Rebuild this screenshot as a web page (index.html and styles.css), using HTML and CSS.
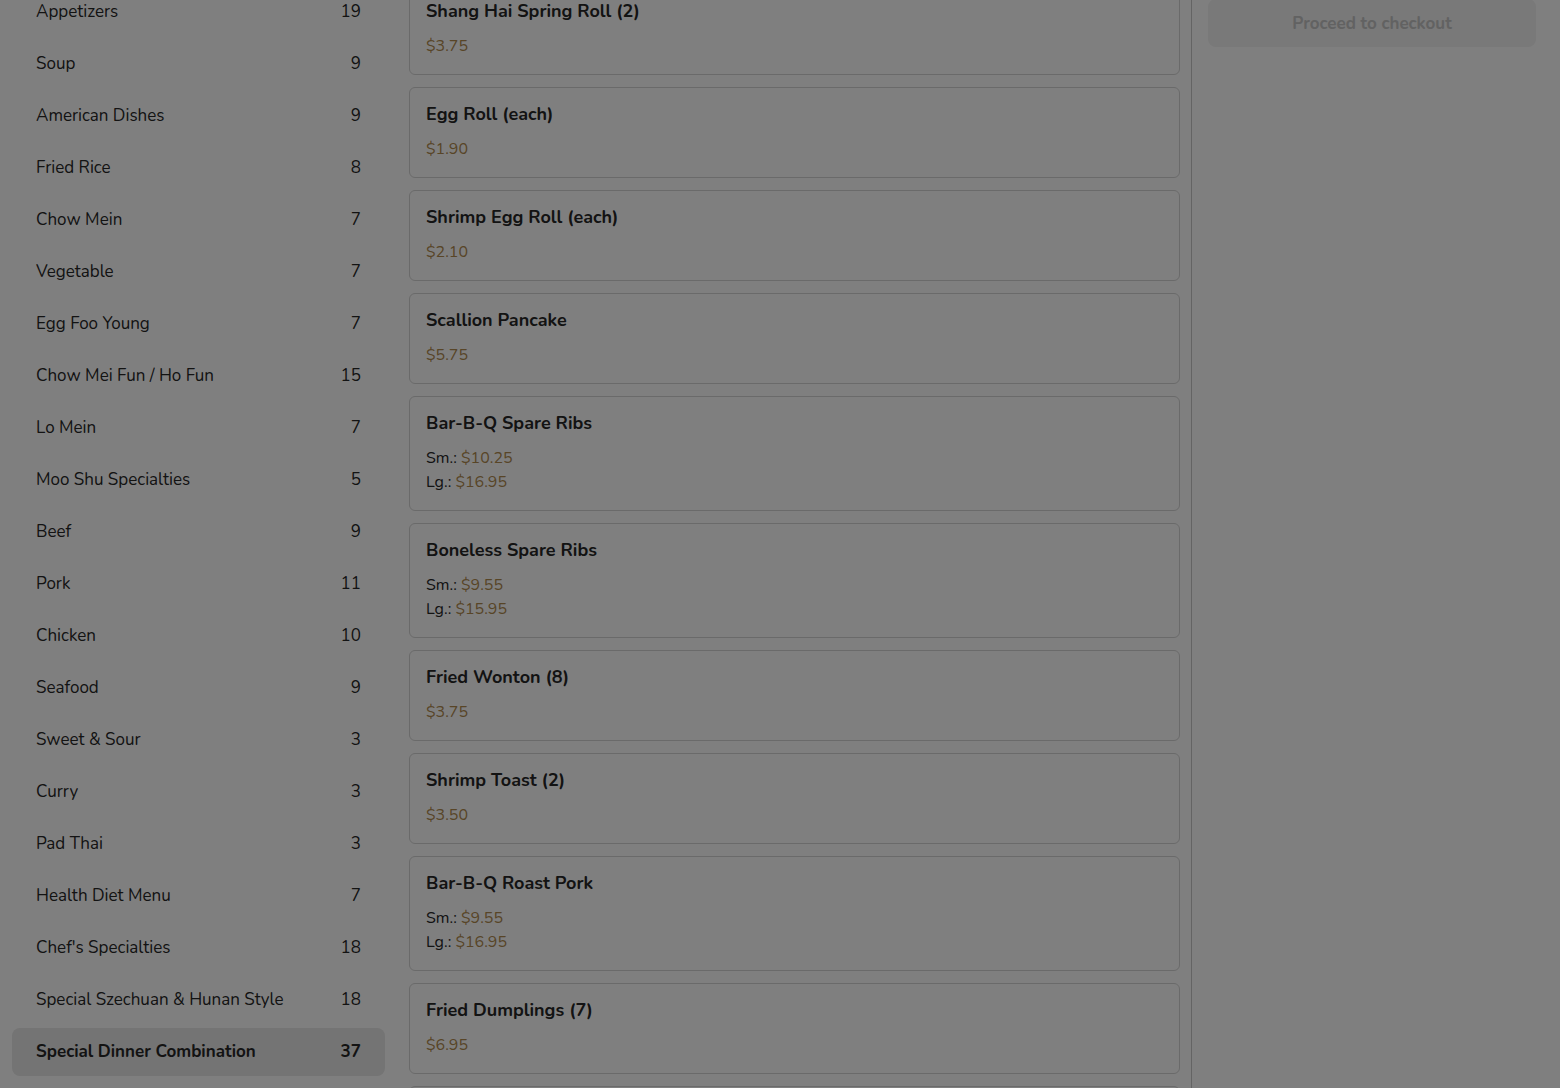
FILE: index.html
```html
<!DOCTYPE html>
<html lang="en">
<head>
<meta charset="utf-8">
<title>Menu</title>
<link rel="stylesheet" href="styles.css">
</head>
<body>
<div class="page">
  <aside class="categories">
    <ul class="cat-list">
      <li class="cat"><span>Appetizers</span><span>19</span></li>
      <li class="cat"><span>Soup</span><span>9</span></li>
      <li class="cat"><span>American Dishes</span><span>9</span></li>
      <li class="cat"><span>Fried Rice</span><span>8</span></li>
      <li class="cat"><span>Chow Mein</span><span>7</span></li>
      <li class="cat"><span>Vegetable</span><span>7</span></li>
      <li class="cat"><span>Egg Foo Young</span><span>7</span></li>
      <li class="cat"><span>Chow Mei Fun / Ho Fun</span><span>15</span></li>
      <li class="cat"><span>Lo Mein</span><span>7</span></li>
      <li class="cat"><span>Moo Shu Specialties</span><span>5</span></li>
      <li class="cat"><span>Beef</span><span>9</span></li>
      <li class="cat"><span>Pork</span><span>11</span></li>
      <li class="cat"><span>Chicken</span><span>10</span></li>
      <li class="cat"><span>Seafood</span><span>9</span></li>
      <li class="cat"><span>Sweet &amp; Sour</span><span>3</span></li>
      <li class="cat"><span>Curry</span><span>3</span></li>
      <li class="cat"><span>Pad Thai</span><span>3</span></li>
      <li class="cat"><span>Health Diet Menu</span><span>7</span></li>
      <li class="cat"><span>Chef's Specialties</span><span>18</span></li>
      <li class="cat"><span>Special Szechuan &amp; Hunan Style</span><span>18</span></li>
      <li class="cat active"><span>Special Dinner Combination</span><span>37</span></li>
    </ul>
  </aside>

  <main class="items">
    <div class="card"><h3>Shang Hai Spring Roll (2)</h3><p class="price">$3.75</p></div>
    <div class="card"><h3>Egg Roll (each)</h3><p class="price">$1.90</p></div>
    <div class="card"><h3>Shrimp Egg Roll (each)</h3><p class="price">$2.10</p></div>
    <div class="card"><h3>Scallion Pancake</h3><p class="price">$5.75</p></div>
    <div class="card"><h3>Bar-B-Q Spare Ribs</h3><p class="price"><span class="size">Sm.:</span> $10.25</p><p class="price"><span class="size">Lg.:</span> $16.95</p></div>
    <div class="card"><h3>Boneless Spare Ribs</h3><p class="price"><span class="size">Sm.:</span> $9.55</p><p class="price"><span class="size">Lg.:</span> $15.95</p></div>
    <div class="card"><h3>Fried Wonton (8)</h3><p class="price">$3.75</p></div>
    <div class="card"><h3>Shrimp Toast (2)</h3><p class="price">$3.50</p></div>
    <div class="card"><h3>Bar-B-Q Roast Pork</h3><p class="price"><span class="size">Sm.:</span> $9.55</p><p class="price"><span class="size">Lg.:</span> $16.95</p></div>
    <div class="card"><h3>Fried Dumplings (7)</h3><p class="price">$6.95</p></div>
    <div class="card card-empty"></div>
  </main>

  <section class="cart">
    <button class="checkout" disabled>Proceed to checkout</button>
  </section>
</div>
<div class="overlay"></div>
</body>
</html>
```
FILE: styles.css
```css
html, body {
  margin: 0;
  padding: 0;
  height: 100%;
  overflow: hidden;
  background: #ffffff;
}

body {
  font-family: "Nunito", "Lato", "Noto Sans", sans-serif;
  color: #262626;
}

.page {
  display: grid;
  grid-template-columns: 385px 795px 1fr;
  align-items: start;
  height: 1088px;
}

.categories {
  padding-left: 12px;
  margin-top: -12px;
}

.cat-list {
  list-style: none;
  margin: 0;
  padding: 0;
  display: flex;
  flex-direction: column;
  gap: 4px;
}

.cat {
  box-sizing: border-box;
  display: flex;
  justify-content: space-between;
  align-items: center;
  height: 48px;
  padding: 0 24px 2px;
  border-radius: 8px;
  font-size: 17px;
}

.cat.active {
  background: #e8e8e8;
  font-weight: 700;
}

.items {
  padding-left: 24px;
  margin-top: -16px;
  display: flex;
  flex-direction: column;
  gap: 12px;
}

.card {
  border: 1px solid #d4d4d4;
  border-radius: 6px;
  padding: 15px 16px 16px;
}

.card-empty {
  height: 80px;
}

.card h3 {
  margin: 0 0 12px;
  font-size: 18px;
  line-height: 22px;
  font-weight: 700;
  color: #262626;
}

.price {
  margin: 0;
  font-size: 16px;
  line-height: 24px;
  color: #b08a4e;
}

.size {
  color: #262626;
}

.cart {
  border-left: 1px solid #c8c8c8;
  margin-left: 11px;
  height: 1088px;
  padding: 0 24px 0 16px;
}

.checkout {
  display: block;
  width: 100%;
  height: 48px;
  margin-top: -1px;
  border: none;
  border-radius: 8px;
  background: #f2f2f2;
  color: #c4c4c4;
  font-family: inherit;
  font-size: 17px;
  font-weight: 700;
}

.overlay {
  position: fixed;
  inset: 0;
  background: rgba(0, 0, 0, 0.5);
}
```
